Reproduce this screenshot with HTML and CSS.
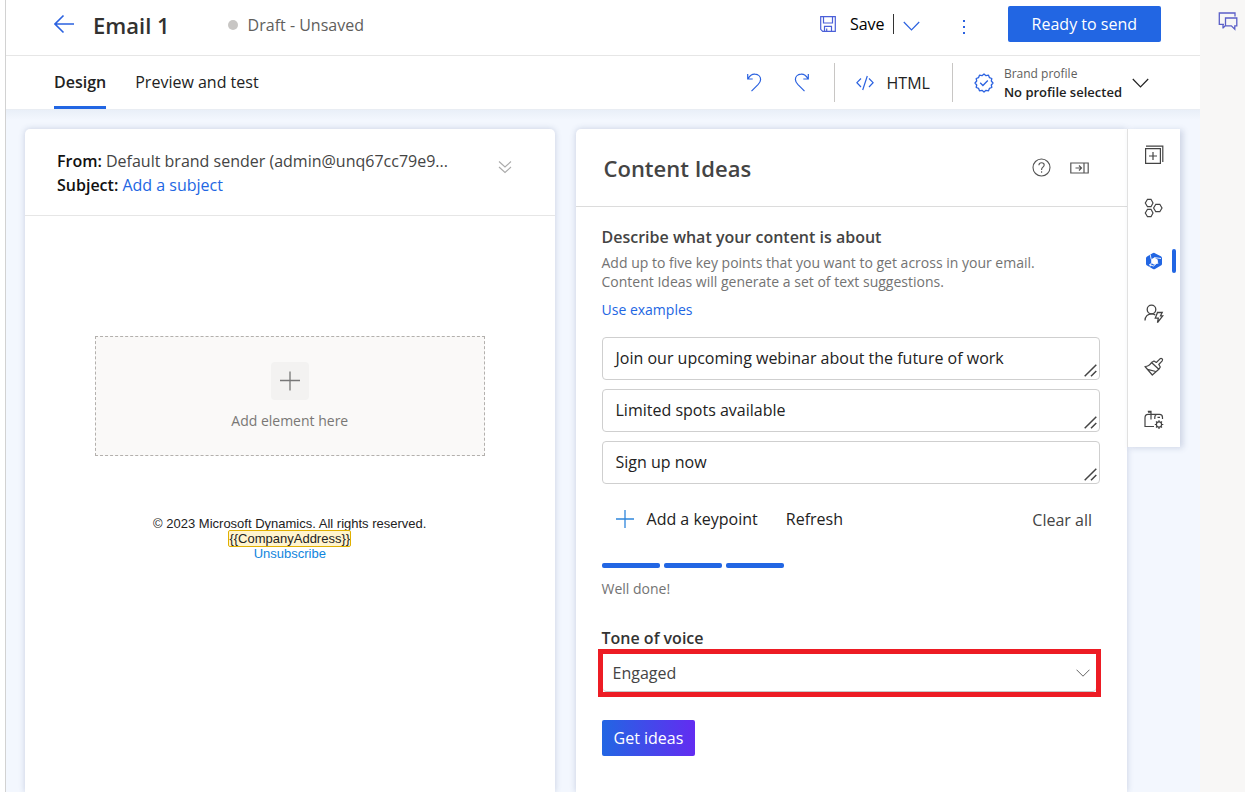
FILE: index.html
```html
<!DOCTYPE html>
<html lang="en">
<head>
<meta charset="utf-8">
<meta name="viewport" content="width=device-width, initial-scale=1">
<title>Email 1</title>
<link rel="stylesheet" href="styles.css">
</head>
<body>
<div class="shell">
  <div class="editor">
    <header class="titlebar">
      <button class="icon-button back" type="button" aria-label="Back">
        <svg width="20" height="20" viewBox="0 0 20 20" fill="none" stroke="currentColor" stroke-width="1.6"><path d="M20 10H1M9.5 1.5 1 10l8.500 8.500"/></svg>
      </button>
      <h1 class="title">Email 1</h1>
      <p class="status"><span class="status-dot"></span>Draft - Unsaved</p>
      <div class="title-actions">
        <button class="save" type="button">
          <svg width="16" height="16" viewBox="0 0 16 16" fill="none" stroke="#4a5fd8" stroke-width="1.200"><path d="M.7.7h14.600v14.600H2.700L.7 13.300zM3.500.7v6.300h9V.7M4.500 15.300v-5h7v5M6.700 15v-2.500"/></svg>
          Save
        </button>
        <button class="icon-button save-more" type="button" aria-label="More save options">
          <svg width="17" height="10" viewBox="0 0 17 10" fill="none" stroke="currentColor" stroke-width="1.200"><path d="m.8 1 7.700 8 7.700-8"/></svg>
        </button>
        <button class="icon-button more" type="button" aria-label="More commands">
          <svg width="4" height="16" viewBox="0 0 4 16" fill="currentColor"><path d="M1 1h2v2H1zM1 7h2v2H1zM1 13h2v2H1z"/></svg>
        </button>
        <button class="primary" type="button">Ready to send</button>
      </div>
    </header>

    <div class="toolbar">
      <nav class="tabs">
        <a class="tab tab-active" href="#design">Design</a>
        <a class="tab" href="#preview">Preview and test</a>
      </nav>
      <div class="tools">
        <div class="history">
          <button class="icon-button" type="button" aria-label="Undo">
            <svg width="16" height="20" viewBox="0 0 16 20" fill="none" stroke="currentColor" stroke-width="1.200"><path d="M1.700 1v5h5M2 5.700C4 2.300 6.500 1 9 1.200c3.500.2 5.600 2.600 5.600 5.300 0 2-.9 3.400-2.600 5.200L5.500 18.200"/></svg>
          </button>
          <button class="icon-button" type="button" aria-label="Redo">
            <svg width="16" height="20" viewBox="0 0 16 20" fill="none" stroke="currentColor" stroke-width="1.200"><path d="M14.300 1v5h-5M14 5.700C12 2.300 9.500 1 7 1.200 3.500 1.400 1.400 3.800 1.400 6.500c0 2 .9 3.400 2.600 5.200l6.500 6.500"/></svg>
          </button>
        </div>
        <button class="html-button" type="button">
          <svg width="18" height="16" viewBox="0 0 18 16" fill="none" stroke="#2b62e0" stroke-width="1.200"><path d="M5 3.500.9 7.700 5 12M13 3.500l4.100 4.200L13 12M11.300 1 6.700 15"/></svg>
          HTML
        </button>
        <button class="profile" type="button">
          <svg width="20" height="20" viewBox="0 0 20 20" fill="none" stroke="#2b62e0" stroke-width="1.300"><path stroke-linejoin="round" d="m10 1 2 1.700 2.500-.5.9 2.400 2.400.9-.5 2.500L19 10l-1.700 2 .5 2.500-2.400.9-.9 2.400-2.500-.5L10 19l-2-1.700-2.500.5-.9-2.400-2.400-.9.5-2.500L1 10l1.700-2-.5-2.500 2.400-.9.9-2.400 2.500.5z"/><path d="m6.200 9.800 2.700 2.700 4.900-5"/></svg>
          <span class="profile-text"><span class="profile-label">Brand profile</span><span class="profile-value">No profile selected</span></span>
          <svg width="17" height="10" viewBox="0 0 17 10" fill="none" stroke="#222" stroke-width="1.200"><path d="m.8 1 7.700 8 7.700-8"/></svg>
        </button>
      </div>
    </div>

    <main class="workspace">
      <section class="card canvas">
        <div class="envelope">
          <div class="envelope-lines">
            <p class="line"><b>From:</b> Default brand sender (admin@unq67cc79e9...</p>
            <p class="line"><b>Subject:</b> <a class="link" href="#subject">Add a subject</a></p>
          </div>
          <button class="icon-button expand" type="button" aria-label="Expand">
            <svg width="14" height="14" viewBox="0 0 14 14" fill="none" stroke="currentColor" stroke-width="1.100"><path d="m1 1.500 6 5.500 6-5.500M1 7l6 5.500L13 7"/></svg>
          </button>
        </div>
        <div class="message">
          <button class="dropzone" type="button">
            <span class="dropzone-plus">
              <svg width="20" height="20" viewBox="0 0 20 20" fill="none" stroke="#777" stroke-width="1.300"><path d="M10 .5v19M0 9.500h20"/></svg>
            </span>
            Add element here
          </button>
          <footer class="message-footer">
            <p>© 2023 Microsoft Dynamics. All rights reserved.</p>
            <p><span class="token">{{CompanyAddress}}</span></p>
            <p><a class="unsubscribe" href="#unsubscribe">Unsubscribe</a></p>
          </footer>
        </div>
      </section>

      <section class="card ideas">
        <header class="ideas-header">
          <h2 class="ideas-title">Content Ideas</h2>
          <button class="icon-button" type="button" aria-label="Help">
            <svg width="19" height="19" viewBox="0 0 19 19" fill="none" stroke="currentColor" stroke-width="1.100"><circle cx="9.500" cy="9.500" r="8.500"/><path d="M6.900 7.300c0-1.600 1.100-2.600 2.700-2.600s2.600 1 2.600 2.300c0 2.100-2.600 2.200-2.600 4.500v.5M9.600 13.300v1.400"/></svg>
          </button>
          <button class="icon-button" type="button" aria-label="Collapse panel">
            <svg width="19" height="12" viewBox="0 0 19 12" fill="none" stroke="currentColor" stroke-width="1.200"><path d="M.8 1h17.400v10H.8zM14 1v10M5.500 6h6M9 3.500 11.500 6 9 8.500"/></svg>
          </button>
        </header>
        <form class="ideas-form">
          <h3 class="ideas-subtitle">Describe what your content is about</h3>
          <p class="hint">Add up to five key points that you want to get across in your email.<br>Content Ideas will generate a set of text suggestions.</p>
          <a class="link examples" href="#examples">Use examples</a>
          <div class="keypoints">
            <div class="keypoint">
              <textarea class="keypoint-input" rows="1" aria-label="Key point 1">Join our upcoming webinar about the future of work</textarea>
              <svg class="grip" width="13" height="13" viewBox="0 0 13 13" fill="none" stroke="#444" stroke-width="1.500"><path d="M.7 12.300 12.300.7M7 12.300 12.300 7"/></svg>
            </div>
            <div class="keypoint">
              <textarea class="keypoint-input" rows="1" aria-label="Key point 2">Limited spots available</textarea>
              <svg class="grip" width="13" height="13" viewBox="0 0 13 13" fill="none" stroke="#444" stroke-width="1.500"><path d="M.7 12.300 12.300.7M7 12.300 12.300 7"/></svg>
            </div>
            <div class="keypoint">
              <textarea class="keypoint-input" rows="1" aria-label="Key point 3">Sign up now</textarea>
              <svg class="grip" width="13" height="13" viewBox="0 0 13 13" fill="none" stroke="#444" stroke-width="1.500"><path d="M.7 12.300 12.300.7M7 12.300 12.300 7"/></svg>
            </div>
          </div>
          <div class="keypoint-actions">
            <button class="text-button add" type="button">
              <svg width="20" height="20" viewBox="0 0 20 20" fill="none" stroke="#2f86dc" stroke-width="1.300"><path d="M10 1v18M1 10h18"/></svg>
              Add a keypoint
            </button>
            <button class="text-button" type="button">Refresh</button>
            <button class="text-button clear" type="button">Clear all</button>
          </div>
          <div class="meter"><span class="meter-bar"></span><span class="meter-bar"></span><span class="meter-bar"></span></div>
          <p class="hint">Well done!</p>
          <label class="tone-label" for="tone">Tone of voice</label>
          <div class="tone">
            <select class="tone-select" id="tone"><option>Engaged</option></select>
            <svg class="tone-chevron" width="14" height="8" viewBox="0 0 14 8" fill="none" stroke="#666" stroke-width="1"><path d="m.5.700 6.500 6.500L13.500.7"/></svg>
          </div>
          <button class="generate" type="button">Get ideas</button>
        </form>
      </section>

      <nav class="rail" aria-label="Editor panels">
        <button class="rail-button" type="button" aria-label="Elements">
          <svg width="20" height="20" viewBox="0 0 20 20" fill="none" stroke="currentColor" stroke-width="1.200"><path d="M1.600 3.600h14.800v14.800H1.600zM9 7v8M5 11h8M2 1.200h16.800V17"/></svg>
        </button>
        <button class="rail-button" type="button" aria-label="Content blocks">
          <svg width="20" height="20" viewBox="0 0 20 20" fill="none" stroke="currentColor" stroke-width="1.200"><path d="M3.500 1.300h3.500l2 3.700-2 3.700H3.500L1.300 5zM3.500 11.300h3.500l2 3.700-2 3.700H3.500L1.300 15zM11.800 6.300h4l2.200 3.700-2.200 3.700h-4L9.600 10z"/></svg>
        </button>
        <button class="rail-button rail-active" type="button" aria-label="Content ideas">
          <svg width="18" height="18" viewBox="0 0 18 18"><path fill="#2266e3" d="M9 .7 15.800 4.300Q17 5 17 6.300v5.400q0 1.300-1.100 1.900L10 17q-1 .6-2 0l-5.900-3.400Q1 13 1 11.700V6.300Q1 5 2.100 4.400L8 1q.5-.3 1-.3z"/><path fill="#fff" d="m9.300 5.600 2.900 1.600v3.700l-3 1.800-3-1.800V7.200z"/><path fill="none" stroke="#fff" stroke-width=".9" d="M6.200 11 5 14.500M6.200 7.300 5.200 2.500M9.300 5.600 16 6.500M12.200 7.500l.6 4.500M12.200 10.900 8.500 14 4 12.500"/></svg>
        </button>
        <button class="rail-button" type="button" aria-label="Personalization">
          <svg width="20" height="20" viewBox="0 0 20 20" fill="none" stroke="currentColor" stroke-width="1.300"><circle cx="7.500" cy="5.500" r="4.300"/><path d="M1 16.500c0-4 2.800-6.700 6.500-6.700 1.500 0 2.700.4 3.700 1.100M13.500 8.500h4.700l-1.700 3.300h2.300l-5.300 6.700.8-4.400h-3z"/></svg>
        </button>
        <button class="rail-button" type="button" aria-label="Theme">
          <svg width="20" height="20" viewBox="0 0 20 20" fill="none" stroke="currentColor" stroke-width="1.200" stroke-linejoin="round"><path d="M1 9.500c2.800 0 5-1.500 6.500-4l7.300 6.800-6.500 5.700zM3.500 12.300l8.300 2.200M7.500 5.500 10 4l2.300 1.500L16 1.800c1.400-1.200 3.300.4 2.200 2L14.800 7.500l1.500 2.500-1.500 2.300"/></svg>
        </button>
        <button class="rail-button" type="button" aria-label="Email settings">
          <svg width="20" height="20" viewBox="0 0 20 20" fill="none" stroke="currentColor" stroke-width="1.200"><path d="M10 16.500H1V8c0-2.500 1.300-3.600 3-3.600h11.500c1.800 0 3 1.200 3 3V9M7 9.500V1.300H3.800M7 2.200H4M10.800 9V7.500c0-2 .8-3 2.200-3M13.500 7.300h2.500"/><circle cx="15" cy="14.500" r="2.600"/><path d="M15 10.300V12M15 17v2M10.800 14.500h1.700M17.500 14.500h1.800M12 11.500l1.200 1.200M18 11.500l-1.200 1.200M12 17.500l1.200-1.200M18 17.500l-1.200-1.200"/></svg>
        </button>
      </nav>
    </main>
  </div>

  <aside class="sidebar">
    <button class="icon-button" type="button" aria-label="Chat">
      <svg width="20" height="19" viewBox="0 0 20 19" fill="none" stroke="#5b5fc7" stroke-width="1.300"><path d="M5 12.300H1.300V1H17v3.500M5 16.500v-4.200M7.500 6h11.300v7.800h-2v3.500l-3.500-3.500H7.500zM2 12.300h4M5 16l2.500-2.500"/></svg>
    </button>
  </aside>
</div>
</body>
</html>
```
FILE: styles.css
```css
* { box-sizing: border-box; }

body {
  margin: 0;
  background: #fff;
  color: #222;
  font-family: "Open Sans", "Noto Sans", sans-serif;
  font-size: 16px;
  line-height: 24px;
}

h1, h2, h3, p { margin: 0; }

button, textarea, select { font: inherit; color: inherit; }

button {
  border: 0;
  padding: 0;
  background: none;
  cursor: pointer;
}

svg { display: block; flex: none; }

.icon-button {
  display: flex;
  align-items: center;
  justify-content: center;
  color: #2b62e0;
}

.link { color: #2266e3; text-decoration: none; }

.shell {
  display: flex;
  min-height: 100vh;
  padding-left: 5px;
}

.editor {
  flex: 1;
  min-width: 0;
  display: flex;
  flex-direction: column;
  border-left: 1px solid #d2d2d2;
}

.sidebar {
  flex: none;
  width: 45px;
  padding: 12px 0 0 10px;
  display: flex;
  justify-content: center;
  align-items: flex-start;
  background: #f8f7f6;
}

/* Title bar */
.titlebar {
  display: flex;
  align-items: center;
  height: 56px;
  padding: 0 39px 8px 48px;
  border-bottom: 1px solid #e6e6e6;
}

.title {
  margin-left: 19px;
  padding-top: 2px;
  font-size: 22px;
  font-weight: 600;
  color: #323130;
}

.status {
  display: flex;
  align-items: center;
  gap: 10px;
  margin-left: 58px;
  padding-top: 2px;
  color: #605e5c;
}

.status-dot {
  width: 10px;
  height: 10px;
  border-radius: 50%;
  background: #c8c6c4;
}

.title-actions {
  display: flex;
  align-items: center;
  margin-left: auto;
}

.save {
  display: flex;
  align-items: center;
  gap: 14px;
  padding-right: 8px;
  color: #000;
}

.save-more {
  height: 20px;
  padding: 4px 0 0 9px;
  border-left: 1px solid #333;
}

.more { width: 4px; margin: 6px 42px 0; }

.primary {
  height: 36px;
  padding: 0 24px;
  border-radius: 2px;
  background: #2266e3;
  color: #fff;
}

/* Tabs and tools */
.toolbar {
  display: flex;
  justify-content: space-between;
  height: 54px;
  padding: 0 51px 0 48px;
  border-bottom: 1px solid #e9edf3;
}

.tabs { display: flex; gap: 29px; }

.tab {
  padding: 14px 0 12px;
  border-bottom: 3px solid transparent;
  color: #222;
  text-decoration: none;
}

.tab-active { border-color: #2266e3; font-weight: 600; }

.tools { display: flex; align-items: center; height: 53px; }

.history { display: flex; gap: 32px; padding-right: 24px; }

.html-button, .profile {
  display: flex;
  align-items: center;
  height: 39px;
  border-left: 1px solid #c8c6c4;
}

.html-button { gap: 13px; padding: 0 22px 0 21px; }

.profile { gap: 10px; padding-left: 21px; text-align: left; }

.profile-text { display: flex; flex-direction: column; }

.profile-label { font-size: 12px; line-height: 18px; color: #605e5c; }

.profile-value { font-size: 13px; line-height: 18px; font-weight: 600; }

/* Workspace */
.workspace {
  flex: 1;
  display: flex;
  align-items: stretch;
  padding: 19px 20px 0 19px;
  background: linear-gradient(#e9eff8, #f3f7fe 10px);
}

.card {
  min-width: 0;
  background: #fff;
  box-shadow: 0 0 6px rgba(60, 80, 130, .24);
}

.canvas {
  flex: 530;
  margin-right: 21px;
  border-radius: 5px 5px 0 0;
}

.envelope {
  display: flex;
  align-items: flex-start;
  justify-content: space-between;
  padding: 20px 43px 18px 32px;
  border-bottom: 1px solid #e6e6e6;
}

.envelope-lines { min-width: 0; color: #444; }

.line b { color: #111; font-weight: 600; }

.expand { margin-top: 11px; color: #aaa; }

.message { padding: 120px 70px 40px; }

.dropzone {
  display: flex;
  flex-direction: column;
  align-items: center;
  gap: 9px;
  width: 100%;
  padding: 25px 16px 22px;
  border: 1px dashed #b3b0ad;
  background: #faf9f8;
  color: #797775;
  font-size: 14px;
}

.dropzone-plus {
  padding: 9px;
  border-radius: 4px;
  background: #f3f2f1;
}

.message-footer {
  margin-top: 60px;
  color: #222;
  font-family: "Liberation Sans", Arial, sans-serif;
  font-size: 13px;
  line-height: 15px;
  text-align: center;
}

.token {
  border-radius: 1px;
  outline: 1px solid #e0b000;
  background: #fff4ce;
}

.unsubscribe { color: #0f85dd; text-decoration: none; }

/* Content ideas panel */
.ideas { flex: 552; border-radius: 5px 0 0 0; }

.ideas-header {
  display: flex;
  align-items: center;
  gap: 19px;
  height: 78px;
  padding: 0 38px 0 28px;
  border-bottom: 1px solid #dcdcdc;
}

.ideas-header .icon-button { color: #555; }

.ideas-title {
  flex: 1;
  font-size: 22px;
  font-weight: 600;
  color: #444;
}

.ideas-form {
  display: flex;
  flex-direction: column;
  align-items: flex-start;
  padding: 18px 27px 36px 26px;
}

.ideas-subtitle {
  font-size: 16px;
  font-weight: 600;
  color: #444;
}

.hint { font-size: 14px; line-height: 19px; color: #737373; }

.ideas-subtitle + .hint { margin-top: 4px; }

.examples { margin-top: 9px; font-size: 14px; line-height: 20px; }

.keypoints {
  display: flex;
  flex-direction: column;
  gap: 9px;
  width: 100%;
  margin-top: 17px;
}

.keypoint { position: relative; }

.keypoint-input {
  display: block;
  width: 100%;
  height: 43px;
  padding: 8px 13px;
  border: 1px solid #cfcfcf;
  border-radius: 4px;
  outline: 0;
  resize: none;
  overflow: hidden;
}

.grip { position: absolute; right: 3px; bottom: 3px; }

.keypoint-actions {
  display: flex;
  align-items: center;
  gap: 28px;
  width: 100%;
  margin-top: 22px;
  padding: 0 8px 0 13px;
}

.text-button { display: flex; align-items: center; gap: 12px; }

.clear { margin-left: auto; padding-top: 2px; color: #444; }

.meter { display: flex; gap: 4px; margin: 31px 0 11px; }

.meter-bar {
  width: 58px;
  height: 5px;
  border-radius: 2px;
  background: #2266e3;
}

.tone-label {
  margin-top: 29px;
  line-height: 22px;
  font-weight: 600;
  color: #333;
}

.tone {
  position: relative;
  align-self: stretch;
  margin: 0 -1px 0 -4px;
  border: 5px solid #ed1c24;
}

.tone-select {
  display: block;
  appearance: none;
  width: 100%;
  height: 38px;
  padding: 0 36px 0 10px;
  border: 0;
  border-bottom: 1px solid #c8c8c8;
  border-radius: 0 0 4px 4px;
  outline: 0;
  background: #fff;
  color: #444;
}

.tone-chevron { position: absolute; right: 6px; top: 15px; pointer-events: none; }

.generate {
  height: 36px;
  margin-top: 23px;
  padding: 0 12px;
  border-radius: 2px;
  background: linear-gradient(90deg, #2266e3, #632cf1);
  color: #fff;
}

/* Panel switcher */
.rail {
  flex: none;
  align-self: flex-start;
  display: flex;
  flex-direction: column;
  width: 53px;
  border-left: 1px solid #e1e1e1;
  background: #fff;
  box-shadow: 3px 1px 6px rgba(60, 80, 130, .2);
}

.rail-button {
  display: flex;
  align-items: center;
  justify-content: center;
  height: 53px;
  padding-bottom: 2px;
  color: #444;
}

.rail-active {
  padding-left: 17px;
  justify-content: space-between;
}

.rail-active::after {
  content: "";
  width: 4px;
  height: 24px;
  margin-right: 4px;
  border-radius: 2px;
  background: #2266e3;
}
```
